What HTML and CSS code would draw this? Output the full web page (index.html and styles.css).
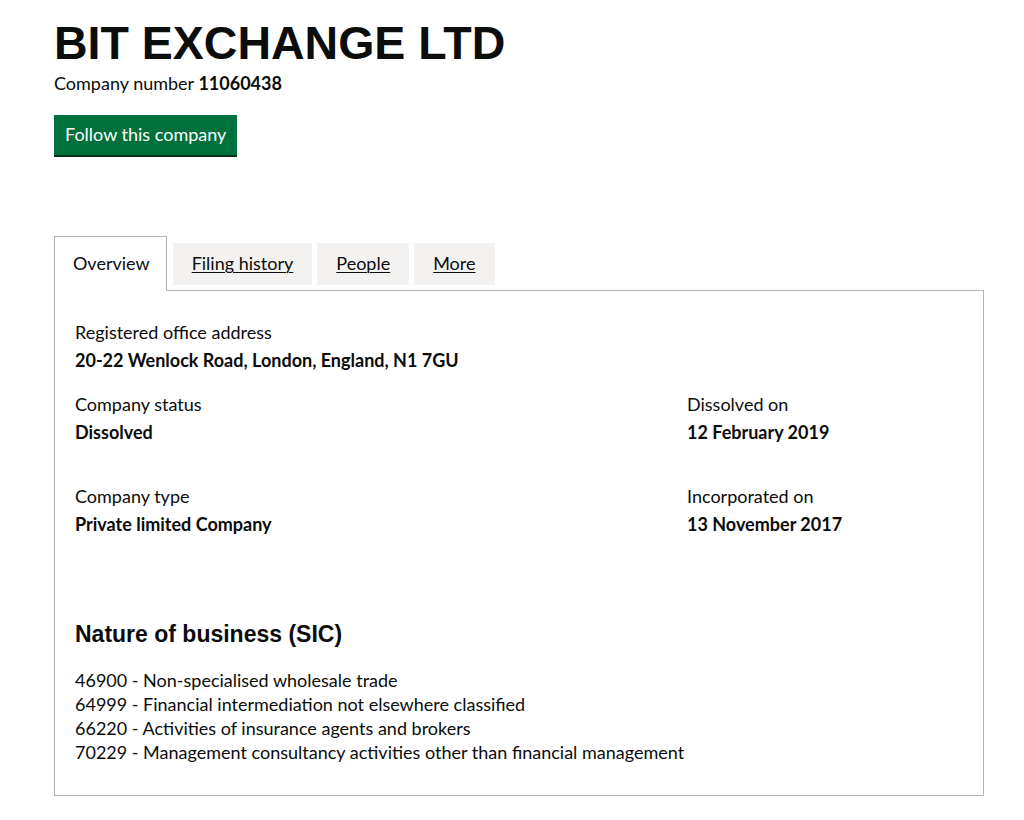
FILE: index.html
```html
<!DOCTYPE html>
<html lang="en">
<head>
<meta charset="utf-8">
<title>BIT EXCHANGE LTD</title>
<link rel="stylesheet" href="styles.css">
</head>
<body>
<main class="page">
  <h1 class="title">BIT EXCHANGE LTD</h1>
  <p class="company-number">Company number <strong>11060438</strong></p>
  <a class="button" href="#">Follow this company</a>

  <div class="tabs">
    <ul class="tab-list">
      <li class="tab tab-selected"><span class="tab-label">Overview</span></li>
      <li class="tab"><a class="tab-link" href="#">Filing history</a></li>
      <li class="tab"><a class="tab-link" href="#">People</a></li>
      <li class="tab"><a class="tab-link" href="#">More</a></li>
    </ul>
    <section class="panel">
      <dl class="field">
        <dt class="label">Registered office address</dt>
        <dd class="value">20-22 Wenlock Road, London, England, N1 7GU</dd>
      </dl>
      <div class="row row-first">
        <dl class="field">
          <dt class="label">Company status</dt>
          <dd class="value">Dissolved</dd>
        </dl>
        <dl class="field">
          <dt class="label">Dissolved on</dt>
          <dd class="value">12 February 2019</dd>
        </dl>
      </div>
      <div class="row row-second">
        <dl class="field">
          <dt class="label">Company type</dt>
          <dd class="value">Private limited Company</dd>
        </dl>
        <dl class="field">
          <dt class="label">Incorporated on</dt>
          <dd class="value">13 November 2017</dd>
        </dl>
      </div>
      <h2 class="heading">Nature of business (SIC)</h2>
      <ul class="sic-list">
        <li>46900 - Non-specialised wholesale trade</li>
        <li>64999 - Financial intermediation not elsewhere classified</li>
        <li>66220 - Activities of insurance agents and brokers</li>
        <li>70229 - Management consultancy activities other than financial management</li>
      </ul>
    </section>
  </div>
</main>
</body>
</html>
```

FILE: styles.css
```css
html, body {
  margin: 0;
  padding: 0;
  background: #ffffff;
}

body {
  font-family: Lato, "Noto Sans", Arial, sans-serif;
  font-size: 18px;
  line-height: 25px;
  color: #0b0c0c;
}

.page {
  width: 930px;
  padding: 20px 0 0 54px;
}

.title {
  margin: 0;
  font-family: "Liberation Sans", Arial, sans-serif;
  font-weight: 700;
  font-size: 46.5px;
  line-height: 46px;
  color: #0b0c0c;
}

.company-number {
  margin: 5px 0 0;
  line-height: 25px;
}

.company-number strong {
  font-weight: 700;
}

.button {
  display: inline-block;
  margin-top: 19px;
  padding: 7px 11px 8px;
  background: #00703c;
  color: #ffffff;
  text-decoration: none;
  line-height: 25px;
  box-shadow: 0 2px 0 #002d18;
}

.tabs {
  margin-top: 81px;
}

.tab-list {
  display: flex;
  align-items: flex-start;
  gap: 5px;
  height: 54px;
  margin: 0;
  padding: 0;
  list-style: none;
}

.tab {
  margin-top: 7px;
  padding: 8px 19px 9px;
  background: #f3f2f1;
  line-height: 25px;
}

.tab-selected {
  position: relative;
  z-index: 1;
  margin-top: 0;
  margin-right: 1px;
  padding: 14px 16px 15px 18px;
  background: #ffffff;
  border: 1px solid #b1b4b6;
  border-bottom: 0;
}

.tab-link {
  color: #0b0c0c;
  text-decoration: underline;
  text-decoration-thickness: 1px;
  text-underline-offset: 2px;
}

.panel {
  border: 1px solid #b1b4b6;
  padding: 27px 20px 31px;
}

.field {
  margin: 0;
}

.label {
  margin: 0;
  line-height: 28px;
}

.value {
  margin: 0;
  font-weight: 700;
  line-height: 28px;
}

.row {
  display: grid;
  grid-template-columns: 612px 1fr;
}

.row-first {
  margin-top: 16px;
}

.row-second {
  margin-top: 36px;
}

.heading {
  margin: 81px 0 0;
  font-family: "Liberation Sans", Arial, sans-serif;
  font-weight: 700;
  font-size: 23px;
  line-height: 30px;
}

.sic-list {
  margin: 19px 0 0;
  padding: 0;
  list-style: none;
  line-height: 24px;
}
```
